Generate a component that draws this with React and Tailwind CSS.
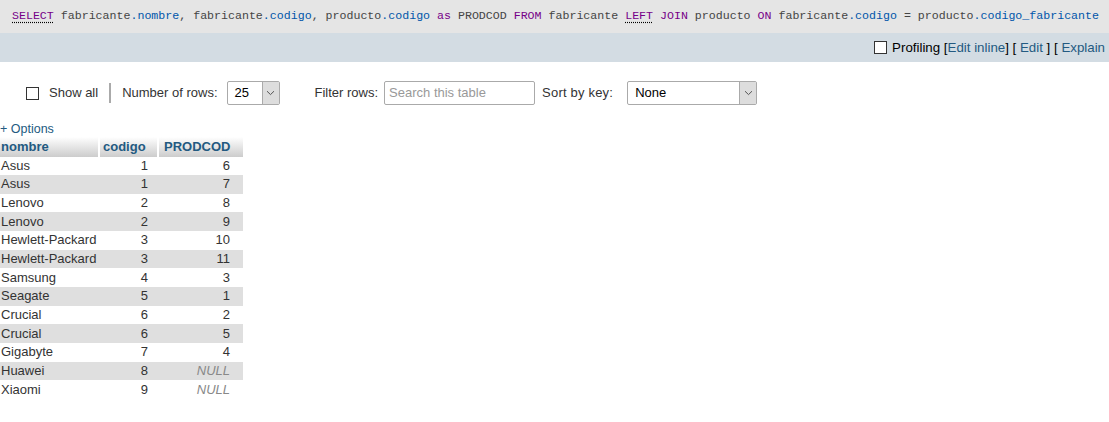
import React from "react";

const rows = [
  ["Asus", "1", "6"],
  ["Asus", "1", "7"],
  ["Lenovo", "2", "8"],
  ["Lenovo", "2", "9"],
  ["Hewlett-Packard", "3", "10"],
  ["Hewlett-Packard", "3", "11"],
  ["Samsung", "4", "3"],
  ["Seagate", "5", "1"],
  ["Crucial", "6", "2"],
  ["Crucial", "6", "5"],
  ["Gigabyte", "7", "4"],
  ["Huawei", "8", null],
  ["Xiaomi", "9", null],
];

function Kw({ children, dotted }) {
  return (
    <span
      className={
        "text-[#770088] " +
        (dotted ? "underline decoration-dotted decoration-black underline-offset-[3px]" : "")
      }
    >
      {children}
    </span>
  );
}
function Col({ children }) {
  return <span className="text-[#0055aa]">{children}</span>;
}

function Chevron() {
  return (
    <svg width="9" height="6" viewBox="0 0 9 6" fill="none">
      <path d="M1 1.2 L4.5 4.6 L8 1.2" stroke="#555" strokeWidth="1" />
    </svg>
  );
}

function Select({ value, width }) {
  return (
    <div
      className={
        "flex h-[24px] items-stretch rounded-[2px] border border-[#aaa] bg-white " + width
      }
    >
      <div className="flex flex-1 items-center pl-[7px] text-[13px] text-[#000]">{value}</div>
      <div className="flex w-[17px] items-center justify-center border-l border-[#aaa] bg-[#dddddd]">
        <Chevron />
      </div>
    </div>
  );
}

export default function App() {
  return (
    <div className="min-h-[422px] w-full bg-white font-['Liberation_Sans',Arial,sans-serif] text-[13px] text-[#444]">
      <div className="flex h-[33px] items-center whitespace-nowrap bg-[#e5e5e5] pl-[12px] pb-[1px] font-['Liberation_Mono','Courier_New',monospace] text-[11.62px] text-[#444]">
        <Kw dotted>SELECT</Kw>&nbsp;fabricante<Col>.nombre</Col>, fabricante<Col>.codigo</Col>,
        producto<Col>.codigo</Col>&nbsp;<Kw>as</Kw>&nbsp;PRODCOD&nbsp;<Kw>FROM</Kw>&nbsp;fabricante&nbsp;
        <Kw dotted>LEFT</Kw>&nbsp;<Kw>JOIN</Kw>&nbsp;producto&nbsp;<Kw>ON</Kw>&nbsp;fabricante
        <Col>.codigo</Col>&nbsp;=&nbsp;producto<Col>.codigo_fabricante</Col>
      </div>
      <div className="flex h-[29px] items-center justify-end whitespace-nowrap bg-[#d3dce3] pr-[4px] text-[13.3px] text-[#000]">
        <span className="mr-[5px] inline-block h-[13px] w-[13px] border border-[#333] bg-white" />
        <span>Profiling [</span>
        <span className="text-[#235a81]">Edit inline</span>
        <span>] [&nbsp;</span>
        <span className="text-[#235a81]">Edit</span>
        <span>&nbsp;] [&nbsp;</span>
        <span className="text-[#235a81]">Explain</span>
      </div>

      <div className="flex h-[62px] items-center pl-[26px] text-[13px] text-[#333]">
        <span className="inline-block h-[13px] w-[13px] border border-[#333] bg-white" />
        <span className="ml-[10px]">Show all</span>
        <span className="ml-[11px] h-[20px] w-[2px] bg-[#aaa]" />
        <span className="ml-[11px]">Number of rows:</span>
        <div className="ml-[9px]">
          <Select value="25" width="w-[53px]" />
        </div>
        <span className="ml-[35px]">Filter rows:</span>
        <div className="ml-[6px] flex h-[24px] w-[151px] items-center rounded-[2px] border border-[#aaa] bg-white pl-[4px] text-[13px] text-[#999]">
          Search this table
        </div>
        <span className="ml-[7px] tracking-[0.2px]">Sort by key:</span>
        <div className="ml-[14px]">
          <Select value="None" width="w-[130px]" />
        </div>
      </div>

      <div className="mt-[-3px] h-[16px] leading-[16px] text-[12.5px] text-[#235a81]">+ Options</div>

      <table className="w-[243px] table-fixed border-separate border-spacing-0 text-[13px] text-[#333]">
        <colgroup>
          <col className="w-[100px]" />
          <col className="w-[59px]" />
          <col className="w-[84px]" />
        </colgroup>
        <thead>
          <tr className="h-[19px]">
            <th className="border-r-2 border-white bg-gradient-to-b from-white to-[#cccccc] p-0 pl-[1px] text-left font-bold text-[#235a81]">
              nombre
            </th>
            <th className="border-r-2 border-white bg-gradient-to-b from-white to-[#cccccc] p-0 pl-[3px] text-left font-bold text-[#235a81]">
              codigo
            </th>
            <th className="bg-gradient-to-b from-white to-[#cccccc] p-0 pl-[5px] text-left font-bold text-[#235a81]">
              PRODCOD
            </th>
          </tr>
        </thead>
        <tbody>
          {rows.map((r, i) => (
            <tr key={i} className={"h-[18.67px] " + (i % 2 === 1 ? "bg-[#dfdfdf]" : "bg-white")}>
              <td className="p-0 pl-[1px] leading-[16px] whitespace-nowrap">{r[0]}</td>
              <td className="p-0 pr-[11px] text-right leading-[16px]">{r[1]}</td>
              <td className="p-0 pr-[13px] text-right leading-[16px]">
                {r[2] === null ? <i className="text-[#888]">NULL</i> : r[2]}
              </td>
            </tr>
          ))}
        </tbody>
      </table>
    </div>
  );
}
